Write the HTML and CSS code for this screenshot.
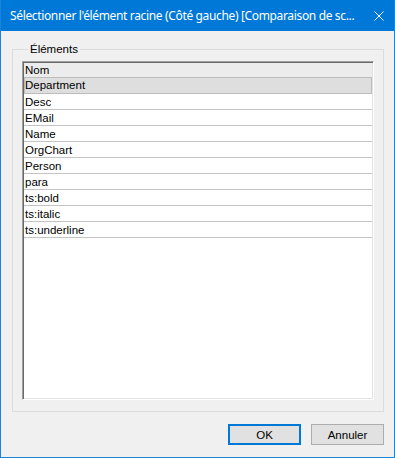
FILE: index.html
```html
<!DOCTYPE html>
<html lang="fr">
<head>
    <meta charset="UTF-8">
    <meta name="viewport" content="width=device-width, initial-scale=1.0">
    <title>Sélectionner l'élément racine</title>
    <link rel="stylesheet" href="styles.css">
</head>
<body>
    <div class="window">
        <div class="titlebar">
            <span class="title">Sélectionner l'élément racine (Côté gauche) [Comparaison de sc...</span>
            <span class="close-btn">
                <svg width="10" height="10" viewBox="0 0 10 10">
                    <path d="M0.5 0.5 L9.5 9.5 M9.5 0.5 L0.5 9.5" stroke="#fff" stroke-width="1" fill="none"/>
                </svg>
            </span>
        </div>
        <fieldset class="group">
            <legend>Éléments</legend>
            <div class="list">
                <div class="list-head">Nom</div>
                <div class="row selected">Department</div>
                <div class="row">Desc</div>
                <div class="row">EMail</div>
                <div class="row">Name</div>
                <div class="row">OrgChart</div>
                <div class="row">Person</div>
                <div class="row">para</div>
                <div class="row">ts:bold</div>
                <div class="row">ts:italic</div>
                <div class="row">ts:underline</div>
            </div>
        </fieldset>
        <div class="buttons">
            <button class="btn default">OK</button>
            <button class="btn">Annuler</button>
        </div>
    </div>
</body>
</html>
```

FILE: styles.css
```css
* {
    margin: 0;
    padding: 0;
    box-sizing: border-box;
}
body {
    font-family: "Liberation Sans", Arial, sans-serif;
    font-size: 11px;
    color: #000;
    background: #f0f0f0;
}
.window {
    width: 395px;
    height: 458px;
    border: 1px solid #1883d7;
    border-top: none;
    background: #f0f0f0;
    display: flex;
    flex-direction: column;
}
.titlebar {
    height: 31px;
    background: #0078d7;
    display: flex;
    align-items: center;
    justify-content: space-between;
    padding-left: 9px;
    padding-right: 10px;
}
.title {
    color: #fff;
    font-family: "Segoe UI", "Noto Sans", sans-serif;
    font-size: 12px;
    letter-spacing: -0.35px;
    white-space: nowrap;
}
.close-btn {
    display: flex;
    width: 10px;
    height: 10px;
}
.group {
    margin: 12px 10px 0 11px;
    border: 1px solid #dcdcdc;
    padding: 5px 9px 11px 9px;
}
.group legend {
    margin-left: 6px;
    padding: 0 2px;
    line-height: 13px;
    font-size: 11.5px;
}
.list {
    height: 339px;
    background: #fff;
    border: 1px solid;
    border-color: #a0a0a0 #fff #fff #a0a0a0;
    box-shadow: inset 1px 1px 0 #696969, inset -1px -1px 0 #e3e3e3;
    padding: 1px;
    font-size: 11.5px;
}
.list-head {
    height: 14px;
    line-height: 15px;
    padding-left: 1px;
    background: #ececec;
}
.row {
    height: 16px;
    line-height: 16px;
    padding-left: 1px;
    border-bottom: 1px solid #c4c4c4;
}
.row.selected {
    height: 17px;
    line-height: 15px;
    background: #dedede;
    border: 1px solid #bcbcbc;
    padding-left: 0;
}
.buttons {
    display: flex;
    justify-content: flex-end;
    gap: 10px;
    padding-right: 10px;
    margin-top: 12px;
}
.btn {
    width: 73px;
    height: 21px;
    background: #e1e1e1;
    border: 1px solid #adadad;
    font-family: "Liberation Sans", Arial, sans-serif;
    font-size: 11.5px;
    color: #000;
}
.btn.default {
    border: 2px solid #0078d7;
}
```
